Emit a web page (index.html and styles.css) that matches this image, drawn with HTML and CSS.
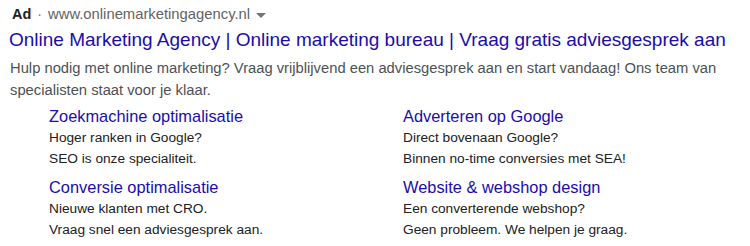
FILE: index.html
```html
<!DOCTYPE html>
<html lang="nl">
<head>
    <meta charset="UTF-8">
    <title>Online Marketing Agency</title>
    <link rel="stylesheet" href="styles.css">
</head>
<body>
    <div class="result">
        <div class="ad-line">
            <span class="ad-label">Ad</span>
            <span class="dot">·</span>
            <span class="url">www.onlinemarketingagency.nl</span>
            <span class="caret"></span>
        </div>
        <a class="title" href="#">Online Marketing Agency | Online marketing bureau | Vraag gratis adviesgesprek aan</a>
        <div class="desc">Hulp nodig met online marketing? Vraag vrijblijvend een adviesgesprek aan en start vandaag! Ons team van specialisten staat voor je klaar.</div>

        <!-- Sitelinks -->
        <div class="sitelinks">
            <div class="sitelink">
                <a class="sitelink-title" href="#">Zoekmachine optimalisatie</a>
                <div class="sitelink-text">Hoger ranken in Google?</div>
                <div class="sitelink-text">SEO is onze specialiteit.</div>
            </div>
            <div class="sitelink">
                <a class="sitelink-title" href="#">Adverteren op Google</a>
                <div class="sitelink-text">Direct bovenaan Google?</div>
                <div class="sitelink-text">Binnen no-time conversies met SEA!</div>
            </div>
            <div class="sitelink">
                <a class="sitelink-title" href="#">Conversie optimalisatie</a>
                <div class="sitelink-text">Nieuwe klanten met CRO.</div>
                <div class="sitelink-text">Vraag snel een adviesgesprek aan.</div>
            </div>
            <div class="sitelink">
                <a class="sitelink-title" href="#">Website &amp; webshop design</a>
                <div class="sitelink-text">Een converterende webshop?</div>
                <div class="sitelink-text">Geen probleem. We helpen je graag.</div>
            </div>
        </div>
    </div>
</body>
</html>
```

FILE: styles.css
```css
* {
    box-sizing: border-box;
}

body {
    margin: 0;
    padding: 0;
    background-color: #ffffff;
    font-family: 'Liberation Sans', Arial, sans-serif;
}

.result {
    padding: 4px 9px 0 9px;
}

/* Ad line */
.ad-line {
    display: flex;
    align-items: center;
    font-size: 14px;
    line-height: 20px;
    padding-left: 3px;
}

.ad-label {
    font-weight: bold;
    color: #202124;
    font-size: 14.5px;
}

.dot {
    color: #70757a;
    margin: 0 6px;
}

.url {
    color: #5f6368;
    font-size: 14.8px;
}

.caret {
    width: 0;
    height: 0;
    border-left: 5px solid transparent;
    border-right: 5px solid transparent;
    border-top: 5px solid #70757a;
    margin-left: 6px;
    margin-top: 2px;
}

/* Title */
.title {
    display: block;
    margin-top: 3px;
    font-size: 19px;
    line-height: 26px;
    color: #1a0dab;
    text-decoration: none;
    white-space: nowrap;
}

/* Description */
.desc {
    margin-top: 4px;
    font-size: 14.75px;
    line-height: 22px;
    color: #4d5156;
    padding-left: 1px;
}

/* Sitelinks */
.sitelinks {
    display: grid;
    grid-template-columns: 354px 1fr;
    row-gap: 7px;
    padding-left: 40px;
    margin-top: 4px;
}

.sitelink-title {
    display: block;
    font-size: 16.4px;
    line-height: 22px;
    color: #1a0dab;
    text-decoration: none;
}

.sitelink-text {
    font-size: 13.7px;
    line-height: 21px;
    color: #202124;
}
```
